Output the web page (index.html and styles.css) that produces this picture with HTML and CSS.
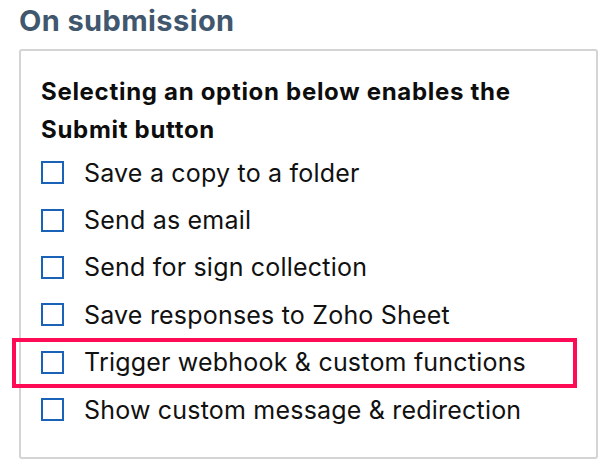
FILE: index.html
```html
<!DOCTYPE html>
<html lang="en">
<head>
    <meta charset="UTF-8">
    <title>On submission</title>
    <link rel="stylesheet" href="styles.css">
</head>
<body>
    <div class="page">
        <h2 class="section-title">On submission</h2>

        <!-- Submission options -->
        <div class="option-box">
            <p class="option-intro">Selecting an option below enables the Submit button</p>
            <ul class="option-list">
                <li class="option"><span class="check"></span>Save a copy to a folder</li>
                <li class="option"><span class="check"></span>Send as email</li>
                <li class="option"><span class="check"></span>Send for sign collection</li>
                <li class="option"><span class="check"></span>Save responses to Zoho Sheet</li>
                <li class="option highlighted"><span class="check"></span>Trigger webhook &amp; custom functions</li>
                <li class="option"><span class="check"></span>Show custom message &amp; redirection</li>
            </ul>
        </div>
    </div>
</body>
</html>
```

FILE: styles.css
```css
body {
    margin: 0;
    background: #ffffff;
    font-family: Inter, "Open Sans", sans-serif;
    color: #111111;
}

.page {
    padding: 2px 20px 0 19px;
}

.section-title {
    margin: 0;
    font-size: 29px;
    line-height: 38px;
    font-weight: 700;
    letter-spacing: 0.4px;
    color: #40576e;
}

.option-box {
    margin-top: 9px;
    width: 555px;
    height: 406px;
    border: 2px solid #d4d4d4;
    border-radius: 3px;
    padding: 0 0 0 20px;
}

.option-intro {
    margin: 22px 0 0;
    width: 520px;
    font-size: 24px;
    line-height: 38px;
    font-weight: 700;
    letter-spacing: 0.7px;
    color: #0d0d0d;
}

.option-list {
    list-style: none;
    margin: 0;
    padding: 0;
}

.option {
    display: flex;
    align-items: center;
    gap: 20px;
    height: 47.4px;
    font-size: 25px;
    letter-spacing: 0.2px;
    position: relative;
}

.check {
    width: 19px;
    height: 19px;
    border: 2px solid #1a62b8;
    flex-shrink: 0;
}

/* red outline drawn over the highlighted row */
.highlighted::before {
    content: "";
    position: absolute;
    left: -29px;
    top: -1px;
    width: 557px;
    height: 42px;
    border: 4px solid #ff0a55;
}
```
